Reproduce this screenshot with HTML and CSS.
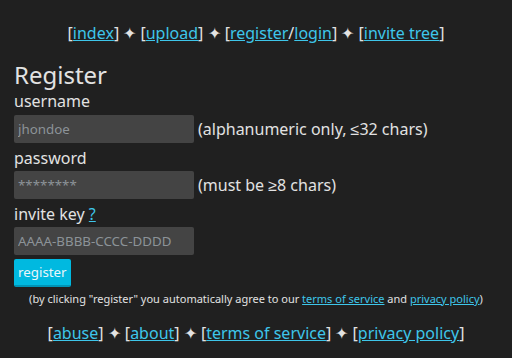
FILE: index.html
```html
<!DOCTYPE html>
<html lang="en">
<head>
    <meta charset="UTF-8">
    <title>Register</title>
    <link rel="stylesheet" href="styles.css">
</head>
<body>
    <nav class="nav">
        [<a href="#">index</a>] ✦ [<a href="#">upload</a>] ✦ [<a href="#">register</a>/<a href="#">login</a>] ✦ [<a href="#">invite tree</a>]
    </nav>

    <form class="form">
        <h1 class="title">Register</h1>

        <label class="label" for="username">username</label>
        <div class="row">
            <input class="field" id="username" type="text" placeholder="jhondoe">
            <span class="hint">(alphanumeric only, ≤32 chars)</span>
        </div>

        <label class="label" for="password">password</label>
        <div class="row">
            <input class="field" id="password" type="password" placeholder="********">
            <span class="hint">(must be ≥8 chars)</span>
        </div>

        <label class="label" for="invite">invite key <a href="#">?</a></label>
        <div class="row">
            <input class="field" id="invite" type="text" placeholder="AAAA-BBBB-CCCC-DDDD">
        </div>

        <button class="action" type="submit">register</button>

        <p class="terms">(by clicking "register" you automatically agree to our <a href="#">terms of service</a> and <a href="#">privacy policy</a>)</p>
    </form>

    <footer class="nav footer">
        [<a href="#">abuse</a>] ✦ [<a href="#">about</a>] ✦ [<a href="#">terms of service</a>] ✦ [<a href="#">privacy policy</a>]
    </footer>
</body>
</html>
```

FILE: styles.css
```css
body {
    margin: 0;
    padding: 0 14px;
    background-color: #202020;
    color: #e2e2e2;
    font-family: "Noto Sans", sans-serif;
    font-size: 16px;
}

a {
    color: #3ec6ea;
}

.nav {
    text-align: center;
    padding-top: 22px;
    color: #e2e2e2;
}

.form {
    display: flex;
    flex-direction: column;
    align-items: flex-start;
}

.title {
    margin: 16px 0 0;
    font-size: 24px;
    font-weight: normal;
    line-height: 30px;
}

.label {
    line-height: 22px;
}

.row {
    display: flex;
    align-items: center;
    gap: 4px;
    margin: 2px 0 4px;
}

.row:first-of-type {
    margin-top: 3px;
}

.field {
    width: 180px;
    height: 28px;
    box-sizing: border-box;
    padding: 0 4px;
    border: none;
    border-radius: 2px;
    background-color: #444444;
    color: #e2e2e2;
    font-family: "Noto Sans", sans-serif;
    font-size: 13.333px;
}

.field::placeholder {
    color: #8c9398;
}

.hint {
    font-size: 16px;
}

.action {
    padding: 0 4px;
    height: 28px;
    border: none;
    border-bottom: 2px solid #0094b6;
    border-radius: 2px;
    background-color: #00b9e0;
    color: #e8f6fa;
    font-family: "Noto Sans", sans-serif;
    font-size: 13.333px;
}

.terms {
    align-self: stretch;
    margin: 4px 0 0;
    text-align: center;
    font-size: 11px;
}

.footer {
    padding-top: 16px;
}
```
